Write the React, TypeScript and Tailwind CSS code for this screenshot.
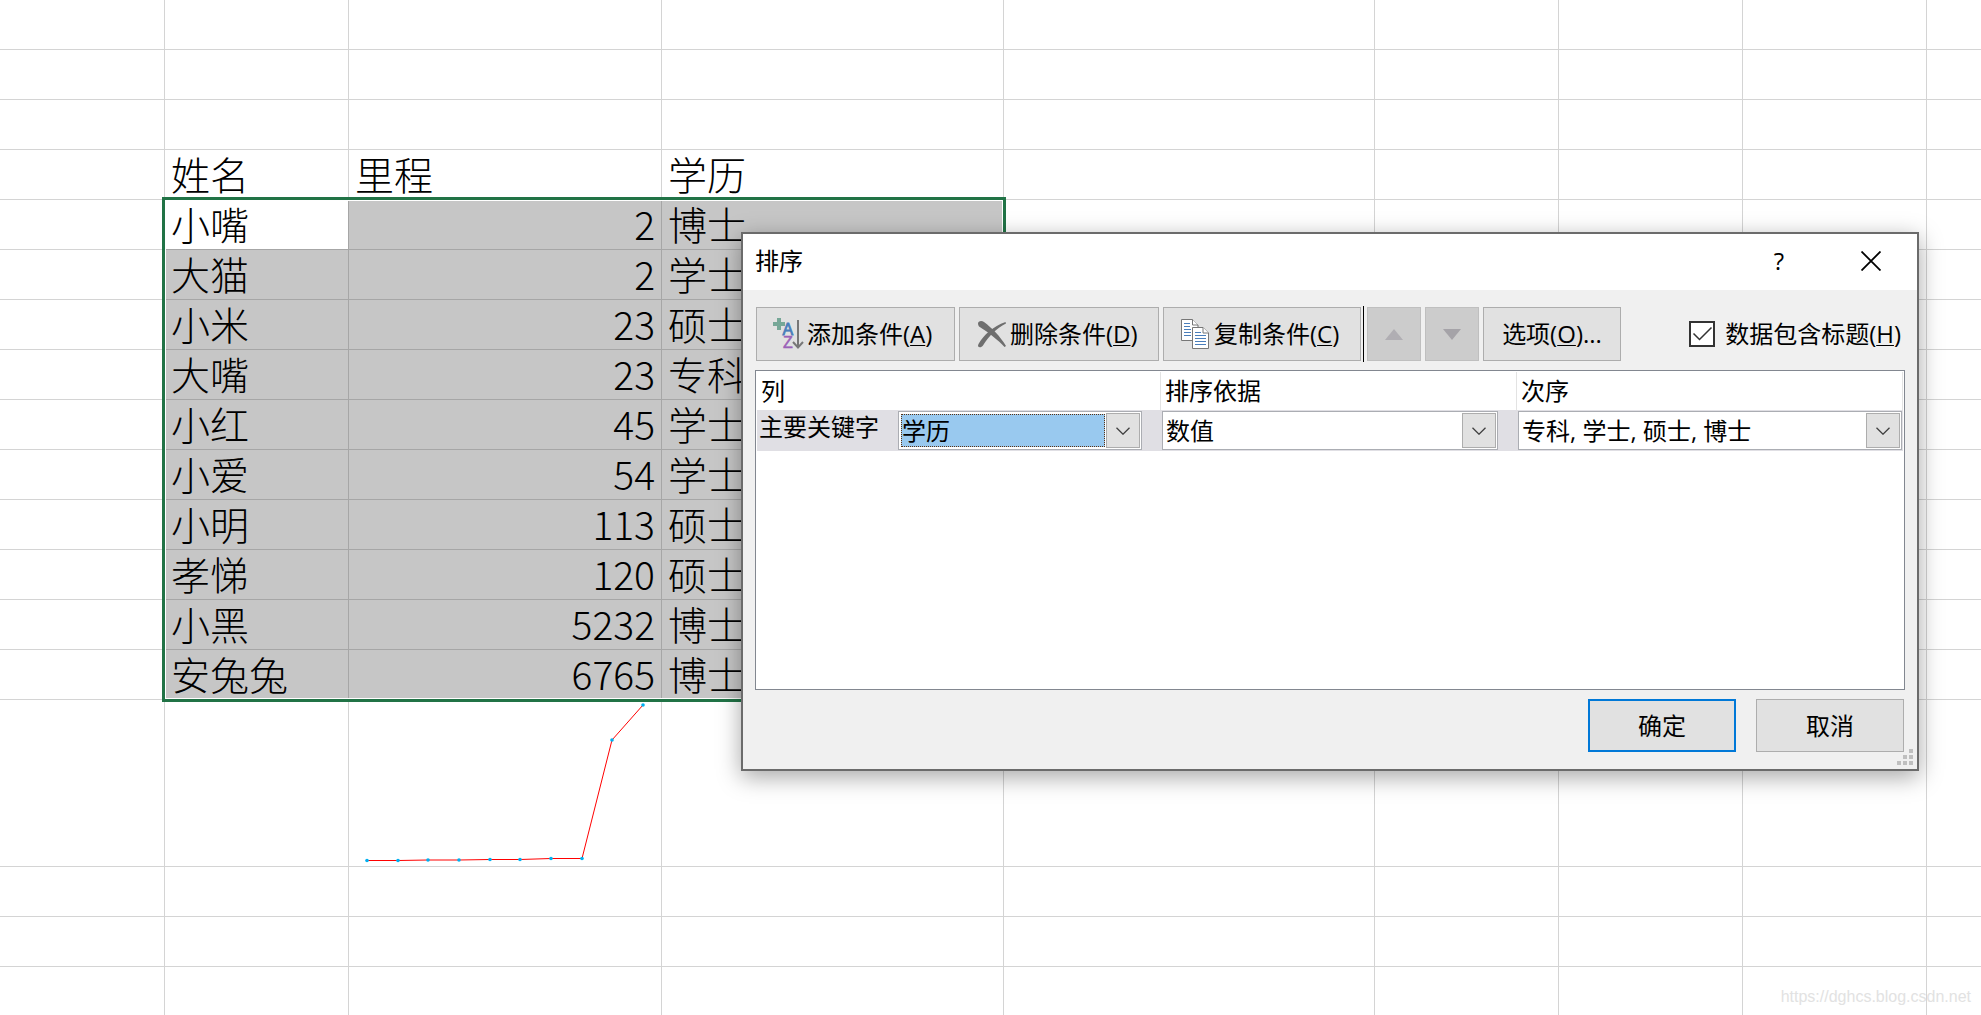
import { useState, type ReactNode } from 'react';

const records = [
  ['小嘴', '2', '博士'],
  ['大猫', '2', '学士'],
  ['小米', '23', '硕士'],
  ['大嘴', '23', '专科'],
  ['小红', '45', '学士'],
  ['小爱', '54', '学士'],
  ['小明', '113', '硕士'],
  ['孝悌', '120', '硕士'],
  ['小黑', '5232', '博士'],
  ['安兔兔', '6765', '博士']
] as const;

const trend = [
  [18, 160.5],
  [49, 160.5],
  [79, 160],
  [110, 160],
  [141, 159.5],
  [171, 159.5],
  [202, 158.5],
  [233, 158.5],
  [263, 40],
  [294, 5]
] as const;

const plainCell = 'border-r border-b border-[#d4d4d4] p-0 last:border-r-0';
const selectedCell = 'border-r border-b border-[#a6a6a6] bg-[#c6c6c6] px-1.5 pt-0 pb-[3px]';
const toolButton =
  'flex h-[54px] shrink-0 items-center border border-[#adadad] bg-[#e1e1e1] hover:border-[#0078d7]';

function EmptyCells({ count }: { count: number }) {
  return Array.from({ length: count }, (_, i) => <td key={i} className={plainCell} />);
}

function EmptyRows({ count }: { count: number }) {
  return Array.from({ length: count }, (_, i) => (
    <tr key={i} className="h-[50px]">
      <EmptyCells count={9} />
    </tr>
  ));
}

function Sparkline() {
  return (
    <svg viewBox="0 0 312 166" className="block h-[166px] w-[312px]" fill="none" aria-hidden="true">
      <polyline points={trend.map((p) => p.join(',')).join(' ')} stroke="#ff0000" strokeWidth="1" />
      {trend.map(([x, y]) => (
        <circle key={x} cx={x} cy={y} r="1.8" fill="#00b0f0" />
      ))}
    </svg>
  );
}

function Sheet() {
  return (
    <div className="relative">
      <table className="w-full table-fixed border-separate border-spacing-0 font-['Noto_Sans_CJK_SC',sans-serif] text-[39px] leading-[46px] font-light">
        <colgroup>
          <col className="w-[165px]" />
          <col className="w-[184px]" />
          <col className="w-[313px]" />
          <col className="w-[342px]" />
          <col className="w-[371px]" />
          <col className="w-[184px]" />
          <col className="w-[184px]" />
          <col className="w-[184px]" />
          <col />
        </colgroup>
        <tbody>
          <EmptyRows count={3} />
          <tr className="h-[50px]">
            <EmptyCells count={1} />
            {['姓名', '里程', '学历'].map((title) => (
              <th key={title} className="border-r border-b border-[#d4d4d4] px-1.5 pt-0 pb-[3px] text-left font-light">
                {title}
              </th>
            ))}
            <EmptyCells count={5} />
          </tr>
          {records.map(([name, distance, degree], i) => (
            <tr key={name} className="h-[50px]">
              <EmptyCells count={1} />
              <td className={i === 0 ? 'border-r border-b border-[#a6a6a6] bg-white px-1.5 pt-0 pb-[3px]' : selectedCell}>
                {name}
              </td>
              <td className={`${selectedCell} text-right`}>{distance}</td>
              <td className={selectedCell}>{degree}</td>
              <EmptyCells count={5} />
            </tr>
          ))}
          <tr className="h-[167px]">
            <EmptyCells count={2} />
            <td className={plainCell}>
              <Sparkline />
            </td>
            <EmptyCells count={6} />
          </tr>
          <EmptyRows count={3} />
        </tbody>
      </table>
      <div className="pointer-events-none absolute top-[197px] left-[162px] h-[505px] w-[844px] border-3 border-[#217346]">
        <div className="h-full border border-white" />
      </div>
    </div>
  );
}

function AddLevelIcon() {
  return (
    <svg viewBox="0 0 32 32" className="h-8 w-8 overflow-visible" aria-hidden="true">
      <path d="M6 0h4v4h4v4h-4v4H6V8H2V4h4z" fill="#76a797" />
      <text x="11.500" y="17" fontFamily="Liberation Sans" fontSize="16" fill="#4a7ebb" stroke="#4a7ebb" strokeWidth="0.8">A</text>
      <text x="12" y="30" fontFamily="Liberation Sans" fontSize="16" fill="#9b62b8" stroke="#9b62b8" strokeWidth="0.5">Z</text>
      <path d="M27 2v27M22 24l5 5.500 5-5.500" fill="none" stroke="#777" strokeWidth="2" />
    </svg>
  );
}

function DeleteLevelIcon() {
  return (
    <svg viewBox="0 0 32 32" className="h-8 w-8" fill="#6e6e6e" aria-hidden="true">
      <path d="M4 5.500C4 3 7.500 2 10 4c8 6 16 14 22 24l-1.500 1C24 22 14 14 5 8.500 4.300 7.500 4 6.500 4 5.500z" />
      <path d="M32 5.500C22 10.500 15 18 9 27.500 7 30.500 2.500 29.500 4.500 26 10 16.500 19 8.500 31.500 4z" />
    </svg>
  );
}

function CopyLevelIcon() {
  return (
    <svg viewBox="0 0 32 32" className="h-8 w-8" fill="#fff" stroke="#777" aria-hidden="true">
      <path d="M3.500 1.500h11l5.500 5.500v15.500h-16.500z" />
      <path d="M14.500 1.500v5.500h5.500" />
      <path d="M6 5.500h6M6 8.500h6M6 11.500h7M6 14.500h7M6 17.500h7" stroke="#4a7ebb" />
      <path d="M14.500 9.500h10.500l5.500 5.500v15.500h-16z" />
      <path d="M25 9.500v5.500h5.500" />
      <path d="M17 14.500h6M17 17.500h11M17 20.500h11M17 23.500h11M17 26.500h11" stroke="#4a7ebb" />
    </svg>
  );
}

type ComboProps = { label: string; options: string[]; active?: boolean; className: string };

function Combo({ label, options, active, className }: ComboProps) {
  return (
    <div className={`flex h-[39px] border border-[#abadb3] bg-white p-px ${className}`}>
      <select
        aria-label={label}
        className={`m-px min-w-0 flex-1 appearance-none leading-[31px] outline-none ${
          active ? 'border border-dotted border-[#5a3214] bg-[#99c9ef]' : 'border border-transparent'
        }`}
      >
        {options.map((option) => (
          <option key={option}>{option}</option>
        ))}
      </select>
      <span className="flex w-[34px] items-center justify-center border border-[#adadad] bg-[#e1e1e1]">
        <svg viewBox="0 0 14 8" className="h-2 w-3.5" fill="none" stroke="#404040" strokeWidth="1.3" aria-hidden="true">
          <path d="M.5.8 7 7.200 13.500.8" />
        </svg>
      </span>
    </div>
  );
}

function Key({ children }: { children: ReactNode }) {
  return <span className="underline decoration-1 underline-offset-2">{children}</span>;
}

function SortDialog() {
  const [hasHeader, setHasHeader] = useState(true);

  return (
    <section
      role="dialog"
      aria-labelledby="sort-title"
      className="absolute top-[232px] right-[62px] left-[741px] border-2 border-[#6b6b6b] bg-[#f0f0f0] text-2xl leading-8 shadow-[0_6px_22px_rgba(0,0,0,0.35)]"
    >
      <header className="flex h-14 items-center bg-white pb-0.5 pl-3">
        <h1 id="sort-title" className="flex-1">排序</h1>
        <button type="button" aria-label="帮助" className="flex h-full w-[92px] items-center justify-center">
          ?
        </button>
        <button type="button" aria-label="关闭" className="flex h-full w-[92px] items-center justify-center">
          <svg viewBox="0 0 20 20" className="h-5 w-5" stroke="#000" strokeWidth="1.800" aria-hidden="true">
            <path d="M.5.5l19 19M19.500.5l-19 19" />
          </svg>
        </button>
      </header>

      <div className="px-3 pt-[17px] pb-[17px]">
        <div className="flex items-center gap-1 pl-px">
          <button type="button" className={`${toolButton} w-[199px] gap-1 pl-3.5`}>
            <AddLevelIcon />
            <span>添加条件(<Key>A</Key>)</span>
          </button>
          <button type="button" className={`${toolButton} w-[200px] gap-1 pl-3.5`}>
            <DeleteLevelIcon />
            <span>删除条件(<Key>D</Key>)</span>
          </button>
          <div className="flex items-center gap-0.5">
            <button type="button" className={`${toolButton} w-[198px] gap-1 pl-3.5`}>
              <CopyLevelIcon />
              <span>复制条件(<Key>C</Key>)</span>
            </button>
            <div className="-my-px mr-px h-14 w-px bg-black" />
            <button type="button" disabled aria-label="上移" className="flex h-[54px] w-[54px] items-center justify-center border border-[#bfbfbf] bg-[#ccc]">
              <svg viewBox="0 0 18 11" className="h-[11px] w-[18px]" fill="#b0aeb3" aria-hidden="true">
                <path d="M9 0l9 11H0z" />
              </svg>
            </button>
          </div>
          <button type="button" disabled aria-label="下移" className="flex h-[54px] w-[54px] items-center justify-center border border-[#bfbfbf] bg-[#ccc]">
            <svg viewBox="0 0 18 11" className="h-[11px] w-[18px]" fill="#a5a3a8" aria-hidden="true">
              <path d="M0 0h18L9 11z" />
            </svg>
          </button>
          <button type="button" className={`${toolButton} w-[138px] justify-center`}>
            <span>选项(<Key>O</Key>)...</span>
          </button>
          <label className="ml-auto flex items-center gap-2.5 pr-1">
            <span className="relative h-[26px] w-[26px]">
              <input
                type="checkbox"
                checked={hasHeader}
                onChange={(e) => setHasHeader(e.target.checked)}
                className="block h-[26px] w-[26px] appearance-none border-2 border-[#333] bg-white"
              />
              {hasHeader && (
                <svg viewBox="0 0 26 26" className="pointer-events-none absolute inset-0" fill="none" stroke="#333" strokeWidth="1.500" aria-hidden="true">
                  <path d="M4.500 12.500l6 6L22.500 6.500" />
                </svg>
              )}
            </span>
            <span>数据包含标题(<Key>H</Key>)</span>
          </label>
        </div>

        <div className="mt-[9px] min-h-[320px] border border-[#828790] bg-white p-px">
          <table className="w-full table-fixed border-separate border-spacing-0">
            <colgroup>
              <col className="w-[404px]" />
              <col className="w-[356px]" />
              <col />
            </colgroup>
            <thead>
              <tr className="h-[38px]">
                {['列', '排序依据', '次序'].map((title) => (
                  <th key={title} className="border-r border-[#e3e3e3] px-1 py-0 text-left font-normal">{title}</th>
                ))}
              </tr>
            </thead>
            <tbody>
              <tr className="h-[41px] bg-[#e0dfe4]">
                <td className="p-0">
                  <div className="flex">
                    <span className="w-[141px] pl-0.5">主要关键字</span>
                    <Combo label="主要关键字" options={['学历', '姓名', '里程']} active className="mr-[19px] flex-1" />
                  </div>
                </td>
                <td className="p-0">
                  <Combo label="排序依据" options={['数值']} className="mr-[19px] ml-px" />
                </td>
                <td className="p-0">
                  <Combo label="次序" options={['专科, 学士, 硕士, 博士']} className="mx-px" />
                </td>
              </tr>
            </tbody>
          </table>
        </div>

        <div className="mt-[9px] flex justify-end gap-5 pr-px">
          <button type="button" className="h-[53px] w-[148px] border-2 border-[#0078d7] bg-[#e1e1e1]">确定</button>
          <button type="button" className="h-[53px] w-[148px] border border-[#adadad] bg-[#e1e1e1]">取消</button>
        </div>
      </div>

      <svg viewBox="0 0 16 16" className="absolute right-1 bottom-1 h-4 w-4" fill="#bfbfbf" aria-hidden="true">
        <path d="M12 0h4v4h-4zM6 6h4v4H6zM12 6h4v4h-4zM0 12h4v4H0zM6 12h4v4H6zM12 12h4v4h-4z" />
      </svg>
    </section>
  );
}

export default function App() {
  return (
    <main className="relative h-screen overflow-hidden bg-white font-['Open_Sans','Noto_Sans_CJK_SC',sans-serif] text-black">
      <Sheet />
      <SortDialog />
      <p className="absolute right-2.5 bottom-2 font-['Liberation_Sans',sans-serif] text-base leading-5 text-[#e2e2e2]">
        https://dghcs.blog.csdn.net
      </p>
    </main>
  );
}
